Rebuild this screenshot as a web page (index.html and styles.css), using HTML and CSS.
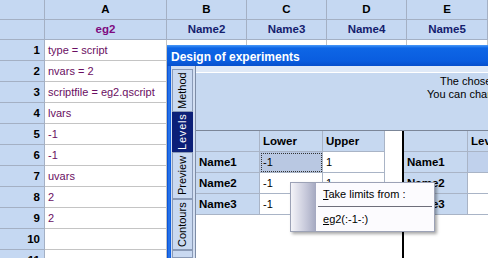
FILE: index.html
```html
<!DOCTYPE html>
<html>
<head>
<meta charset="utf-8">
<link rel="stylesheet" href="styles.css">
</head>
<body>
<div class="sheet">
  <div class="hd"></div><div class="hd">A</div><div class="hd">B</div><div class="hd">C</div><div class="hd">D</div><div class="hd">E</div>
  <div class="hd"></div><div class="hd nm eg">eg2</div><div class="hd nm">Name2</div><div class="hd nm">Name3</div><div class="hd nm">Name4</div><div class="hd nm">Name5</div>
  <div class="rh">1</div><div class="c">type = script</div><div class="c"></div><div class="c"></div><div class="c"></div><div class="c"></div>
  <div class="rh">2</div><div class="c">nvars = 2</div><div class="c"></div><div class="c"></div><div class="c"></div><div class="c"></div>
  <div class="rh">3</div><div class="c">scriptfile = eg2.qscript</div><div class="c"></div><div class="c"></div><div class="c"></div><div class="c"></div>
  <div class="rh">4</div><div class="c">lvars</div><div class="c"></div><div class="c"></div><div class="c"></div><div class="c"></div>
  <div class="rh">5</div><div class="c">-1</div><div class="c"></div><div class="c"></div><div class="c"></div><div class="c"></div>
  <div class="rh">6</div><div class="c">-1</div><div class="c"></div><div class="c"></div><div class="c"></div><div class="c"></div>
  <div class="rh">7</div><div class="c">uvars</div><div class="c"></div><div class="c"></div><div class="c"></div><div class="c"></div>
  <div class="rh">8</div><div class="c">2</div><div class="c"></div><div class="c"></div><div class="c"></div><div class="c"></div>
  <div class="rh">9</div><div class="c">2</div><div class="c"></div><div class="c"></div><div class="c"></div><div class="c"></div>
  <div class="rh">10</div><div class="c"></div><div class="c"></div><div class="c"></div><div class="c"></div><div class="c"></div>
  <div class="rh">11</div><div class="c"></div><div class="c"></div><div class="c"></div><div class="c"></div><div class="c"></div>
</div>

<div class="dialog">
  <div class="title">Design of experiments</div>
  <div class="dbody">
    <div class="lborder"></div>
    <div class="tabs">
      <div class="tab t-method">Method</div>
      <div class="tab t-levels sel">Levels</div>
      <div class="tab t-preview">Preview</div>
      <div class="tab t-contours">Contours</div>
      <div class="tab t-rest"></div>
    </div>
    <div class="content">
      <div class="panel">
        <div class="msg">
          <div class="l1">The chosen design needs the levels of each factor.</div>
          <div class="l2">You can change them in the table below.</div>
        </div>
        <div class="grid">
          <div class="tbl left">
            <div class="row">
              <div class="g h w64"></div><div class="g h w63">Lower</div><div class="g h w62">Upper</div>
            </div>
            <div class="row">
              <div class="g h w64">Name1</div><div class="g w63 cur">-1</div><div class="g w62">1</div>
            </div>
            <div class="row">
              <div class="g h w64">Name2</div><div class="g w63">-1</div><div class="g w62">1</div>
            </div>
            <div class="row">
              <div class="g h w64">Name3</div><div class="g w63">-1</div><div class="g w62">1</div>
            </div>
          </div>
          <div class="split"></div>
          <div class="tbl right">
            <div class="row">
              <div class="g h w64"></div><div class="g h w63">Levels</div>
            </div>
            <div class="row">
              <div class="g h w64">Name1</div><div class="g w63 rsel"></div>
            </div>
            <div class="row">
              <div class="g h w64">Name2</div><div class="g w63"></div>
            </div>
            <div class="row">
              <div class="g h w64">Name3</div><div class="g w63"></div>
            </div>
          </div>
        </div>
      </div>
    </div>
  </div>
</div>

<div class="menu">
  <div class="strip"></div>
  <div class="items">
    <div class="item i1"><u>T</u>ake limits from :</div>
    <div class="sep"></div>
    <div class="item i2"><u>e</u>g2(:-1-:)</div>
  </div>
</div>
</body>
</html>
```
FILE: styles.css
```css
html, body {
  margin: 0;
  padding: 0;
}
body {
  width: 488px;
  height: 258px;
  overflow: hidden;
  position: relative;
  background: #ffffff;
  font-family: "Liberation Sans", Arial, sans-serif;
  font-size: 11px;
}
.sheet {
  display: grid;
  grid-template-columns: 45px 122px 80px 80px 80px 81px;
  grid-template-rows: 20px 20px;
  grid-auto-rows: 21px;
}
.sheet > div {
  box-sizing: border-box;
  border-right: 1px solid #a4b0c4;
  border-bottom: 1px solid #a4b0c4;
  white-space: nowrap;
  overflow: hidden;
}
.hd {
  background: #c5d8f2;
  font-weight: bold;
  font-size: 11.5px;
  text-align: center;
  line-height: 19px;
  color: #000;
}
.hd.nm {
  color: #14206e;
}
.hd.eg {
  color: #7e0a80;
}
.rh {
  background: #c5d8f2;
  font-weight: bold;
  font-size: 11.5px;
  text-align: right;
  padding-right: 4px;
  line-height: 20px;
}
.sheet > .c {
  border-right: 1px solid #c4c4c4;
  border-bottom: 1px solid #c4c4c4;
  color: #6a0e62;
  padding-left: 3px;
  line-height: 20px;
}

/* dialog */
.dialog {
  position: absolute;
  left: 167px;
  top: 45px;
  width: 321px;
  height: 213px;
  display: flex;
  flex-direction: column;
}
.title {
  height: 21px;
  box-sizing: border-box;
  padding: 4px 0 0 4px;
  line-height: 16px;
  color: #ffffff;
  font-weight: bold;
  font-size: 12px;
  background: linear-gradient(#4a9af8 0px, #0e66e6 3px, #0a5ddf 16px, #0850cc 21px);
}
.dbody {
  flex: 1;
  display: flex;
  min-height: 0;
}
.lborder {
  width: 4px;
  flex: none;
  background: linear-gradient(to right, #0048d0, #2f7cf0 50%, #0a58dc);
}
.tabs {
  width: 24px;
  flex: none;
  background: #d3dff2;
  padding-top: 3px;
  display: flex;
  flex-direction: column;
  box-sizing: border-box;
}
.tab {
  width: 21px;
  margin-left: 1px;
  box-sizing: border-box;
  writing-mode: vertical-rl;
  transform: rotate(180deg);
  text-align: center;
  line-height: 19px;
  border: 1px solid #8a9ab6;
  background: #c9d9f1;
  color: #000;
  font-size: 11px;
  white-space: nowrap;
  flex: none;
}
.t-method { height: 43px; }
.t-levels { height: 40px; letter-spacing: 0.8px; }
.t-preview { height: 47px; }
.t-contours { height: 51px; }
.t-rest { flex: 1; }
.tab.sel {
  background: #0b1f78;
  border-color: #0b1f78;
  color: #ffffff;
}
.content {
  flex: 1;
  border-left: 1px solid #7d8ca6;
  background: #dfe9f7;
  padding-top: 6px;
  display: flex;
  flex-direction: column;
  min-width: 0;
}
.panel {
  flex: 1;
  border-top: 1px solid #ffffff;
  background: #c6d8f0;
  display: flex;
  flex-direction: column;
  min-height: 0;
}
.msg {
  height: 57px;
  flex: none;
  box-sizing: border-box;
  padding-top: 2px;
  line-height: 13px;
  font-size: 11px;
  color: #000;
  white-space: nowrap;
  overflow: hidden;
}
.l1 { padding-left: 244px; }
.l2 { padding-left: 231px; }
.grid {
  flex: 1;
  background: #ffffff;
  border-top: 1px solid #7b8698;
  display: flex;
  overflow: hidden;
  min-width: 0;
}
.tbl {
  display: flex;
  flex-direction: column;
}
.tbl.left { width: 206px; flex: none; }
.tbl.right { flex: 1 1 0; min-width: 0; overflow: hidden; }
.row {
  display: flex;
  height: 21px;
}
.g {
  box-sizing: border-box;
  height: 21px;
  border-right: 1px solid #a9b4c6;
  border-bottom: 1px solid #a9b4c6;
  padding-left: 3px;
  line-height: 20px;
  font-size: 11px;
  white-space: nowrap;
  overflow: hidden;
  flex: none;
}
.g.h {
  background: #c6d8f0;
  font-weight: bold;
  font-size: 11.5px;
  color: #000;
}
.w64 { width: 64px; }
.w63 { width: 63px; }
.w62 { width: 62px; }
.g.cur {
  background: #b9c8e2;
  outline: 1px dotted #333;
  outline-offset: -2px;
}
.g.rsel {
  background: #c0d1ec;
}
.split {
  width: 2px;
  background: #000;
  flex: none;
}

/* context menu */
.menu {
  position: absolute;
  left: 290px;
  top: 182px;
  width: 145px;
  height: 50px;
  box-sizing: border-box;
  border: 1px solid #9ca2b6;
  background: #fcfbfe;
  display: flex;
  box-shadow: 2px 2px 3px rgba(0, 0, 0, 0.35);
}
.strip {
  width: 25px;
  flex: none;
  background: linear-gradient(to right, #f4f4f8, #c6c8da 60%, #a4a8c0);
}
.items {
  flex: 1;
  display: flex;
  flex-direction: column;
}
.item {
  padding-left: 7px;
  font-size: 11px;
  color: #000;
  white-space: nowrap;
}
.i1 {
  height: 24px;
  line-height: 23px;
}
.sep {
  height: 1px;
  margin-left: 2px;
  margin-right: 2px;
  background: #6e6e7a;
}
.i2 {
  flex: 1;
  line-height: 24px;
}
```
